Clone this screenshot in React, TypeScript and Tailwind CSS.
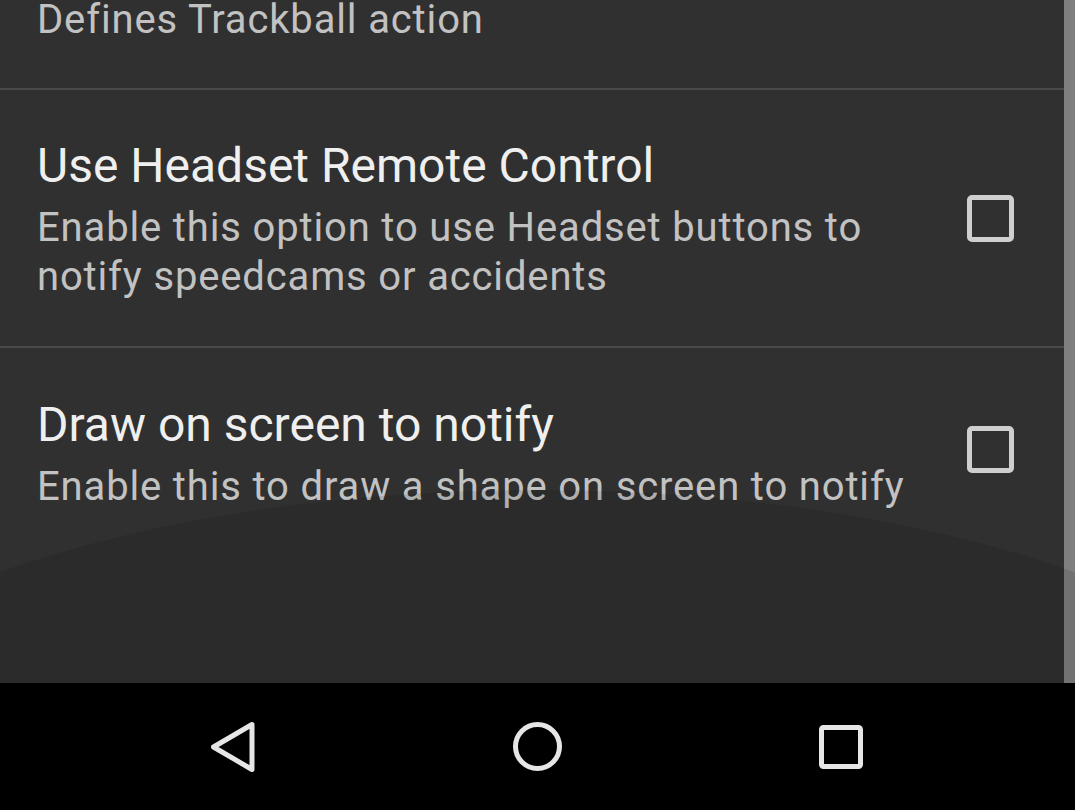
import React from 'react';

interface PrefProps {
  title: string;
  summary: string;
  pt: string;
  boxOffset?: string;
}

function Checkbox({ className = '' }: { className?: string }) {
  return <div className={`w-[47px] h-[47px] shrink-0 rounded-[5px] border-[5px] border-[#cfcfcf] ${className}`} />;
}

function PrefRow({ title, summary, pt, boxOffset }: PrefProps) {
  return (
    <div className={`flex items-center gap-[37px] pl-[37px] pr-[61px] ${pt}`}>
      <div className="flex-1 min-w-0">
        <div className="text-[48px] leading-[56px] text-[#efefef]">{title}</div>
        <div className="mt-[9px] text-[40px] leading-[49px] tracking-[0.85px] text-[#c2c2c2]">{summary}</div>
      </div>
      <Checkbox className={boxOffset} />
    </div>
  );
}

function Divider() {
  return <div className="h-[2px] bg-[#4a4a4a]" />;
}

export default function App() {
  return (
    <div className="w-[1075px] h-[810px] flex flex-col overflow-hidden bg-black font-['Roboto',sans-serif]">
      {/* Preference list */}
      <div className="relative h-[683px] overflow-hidden bg-[#303030]">
        <div className="h-[88px] overflow-hidden">
          <div className="mt-[-5px] pl-[37px] text-[40px] leading-[49px] tracking-[0.85px] text-[#c2c2c2]">Defines Trackball action</div>
        </div>
        <Divider />
        <div className="h-[256px]">
          <PrefRow
            pt="pt-[48px]"
            title="Use Headset Remote Control"
            summary="Enable this option to use Headset buttons to notify speedcams or accidents"
            boxOffset="mb-[3px]"
          />
        </div>
        <Divider />
        <PrefRow
          pt="pt-[49px]"
          title="Draw on screen to notify"
          summary="Enable this to draw a shape on screen to notify"
          boxOffset="mb-[9px]"
        />

        {/* scrollbar */}
        <div className="absolute right-0 top-0 bottom-0 w-[11px] bg-[#7f7f7f]" />

        {/* overscroll edge shade */}
        <div className="pointer-events-none absolute left-[-263px] top-[490px] w-[1600px] h-[634px] rounded-[50%] bg-black/[0.1]" />
      </div>

      {/* Navigation bar */}
      <div className="flex-1 flex items-center justify-center">
        <div className="w-[303px] flex justify-center pr-[4px]">
          <svg width="44" height="50" viewBox="0 0 44 50" fill="none">
            <polygon points="41,2.5 2.5,25 41,47.5" stroke="#e6e6e6" strokeWidth="5" strokeLinejoin="round" />
          </svg>
        </div>
        <div className="w-[303px] flex justify-center">
          <svg width="49" height="49" viewBox="0 0 49 49" fill="none">
            <circle cx="24.5" cy="24.5" r="22" stroke="#e6e6e6" strokeWidth="5" />
          </svg>
        </div>
        <div className="w-[303px] flex justify-center">
          <svg width="44" height="44" viewBox="0 0 44 44" fill="none">
            <rect x="2.5" y="2.5" width="39" height="39" rx="2" stroke="#e6e6e6" strokeWidth="5" />
          </svg>
        </div>
      </div>
    </div>
  );
}
